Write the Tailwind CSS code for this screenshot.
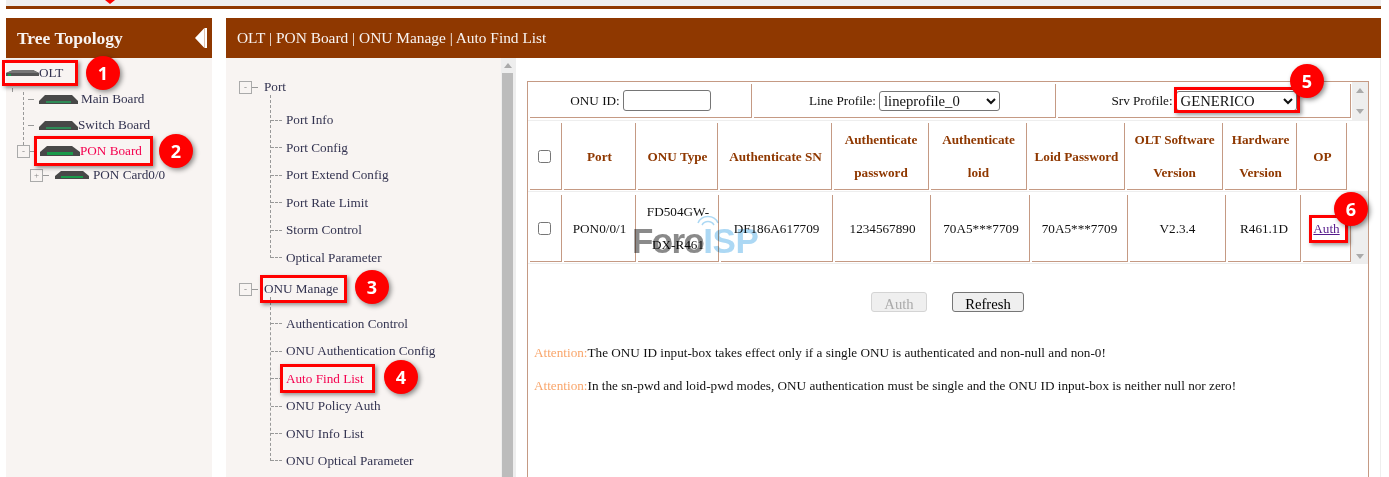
<!DOCTYPE html>
<html lang="en">
<head>
    <meta charset="UTF-8">
    <meta name="viewport" content="width=device-width, initial-scale=1.0">
    <title>Auto Find List</title>
    <script src="https://cdn.jsdelivr.net/npm/@tailwindcss/browser@4"></script>
</head>
<body class="relative h-[477px] overflow-hidden bg-white font-['Liberation_Serif',serif] text-[13.2px] text-[#111]">
    <!-- top strip -->
    <div class="ml-[6px] mr-[8px]">
        <div class="h-[6px] bg-[#eeeeee]"></div>
        <div class="h-[3px] bg-[#8f3800]"></div>
    </div>

    <div class="ml-[6px] mr-[8px] mt-[9px] flex gap-[14px]">
        <!-- tree topology -->
        <aside class="w-[206px] shrink-0">
            <div class="flex h-[40px] items-center justify-between bg-[#8f3800] pl-[11px] pr-[5px] text-[17.5px] font-bold text-[#f8f4f2]">
                <span>Tree Topology</span>
                <svg width="12" height="22" viewBox="0 0 12 22"><path d="M0 11 9.4 1V21Z M9.7 1H12V21H9.7Z" fill="#fff"/></svg>
            </div>
            <div class="h-[419px] bg-[#f8f4f2] pt-[2px] text-[#333350]">
                <div class="flex h-[26px] items-center">
                    <svg width="33" height="8" viewBox="0 0 33 8"><path d="M0 4 7 1H27L33 4V7H0Z" fill="#555"/><path d="M7 1H27L33 4H0Z" fill="#777"/><rect x="2" y="5" width="3" height="2" fill="#1a9a4a"/></svg>
                    <span>OLT</span>
                </div>
                <div class="ml-[6px] mt-[2px] h-[4px] border-l border-dashed border-[#999]"></div>
                <ul class="ml-[17px] flex flex-col gap-[12px] border-l border-dashed border-[#999] pb-[13px]">
                    <li class="flex h-[14px] items-center">
                        <span class="ml-[4px] mr-[5px] w-[6px] border-t border-[#999]"></span>
                        <svg width="39" height="9" viewBox="0 0 39 9"><path d="M0 6 6 0H33L39 6V9H0Z" fill="#484848"/><rect x="7" y="6" width="25" height="2" fill="#2e8b57"/></svg>
                        <span class="ml-[3px]">Main Board</span>
                    </li>
                    <li class="flex h-[14px] items-center">
                        <span class="ml-[4px] mr-[5px] w-[6px] border-t border-[#999]"></span>
                        <svg width="39" height="9" viewBox="0 0 39 9"><path d="M0 6 6 0H33L39 6V9H0Z" fill="#484848"/><rect x="7" y="6" width="25" height="2" fill="#2e8b57"/></svg>
                        <span>Switch Board</span>
                    </li>
                </ul>
                <div class="ml-[11px] flex h-[12px] items-center">
                    <span class="flex size-[13px] items-center justify-center border border-[#aaa] text-[9px] leading-none text-[#888]">-</span>
                    <span class="w-[6px] border-t border-[#999]"></span>
                    <svg class="ml-[4px]" width="40" height="10" viewBox="0 0 40 10"><path d="M0 6 7 0H32L40 6V10H0Z" fill="#484848"/><rect x="7" y="6" width="26" height="3" fill="#1a9a4a"/></svg>
                    <span class="text-[#f5004f]">PON Board</span>
                </div>
                <div class="ml-[24px] mt-[12px] flex h-[12px] items-center">
                    <span class="flex size-[13px] items-center justify-center border border-[#aaa] text-[9px] leading-none text-[#888]">+</span>
                    <span class="w-[6px] border-t border-[#999]"></span>
                    <svg class="ml-[6px]" width="34" height="8" viewBox="0 0 34 8"><path d="M0 5 6 0H28L34 5V8H0Z" fill="#484848"/><rect x="6" y="5" width="22" height="2" fill="#1a9a4a"/></svg>
                    <span class="ml-[4px]">PON Card0/0</span>
                </div>
            </div>
        </aside>

        <section class="min-w-0 flex-1">
            <div class="flex h-[40px] items-center bg-[#8f3800] pl-[11px] text-[15.4px] text-[#f8f4f2]">OLT | PON Board | ONU Manage | Auto Find List</div>
            <div class="flex h-[419px]">
                <!-- menu -->
                <nav class="w-[275px] shrink-0 bg-[#f8f4f2] pl-[13px] pt-[21px] text-[#333350]">
                    <div class="flex h-[16px] items-center">
                        <span class="flex size-[13px] items-center justify-center border border-[#aaa] text-[9px] leading-none text-[#888]">-</span>
                        <span class="w-[6px] border-t border-[#999]"></span>
                        <span class="ml-[6px]">Port</span>
                    </div>
                    <ul class="ml-[31px] flex flex-col border-l border-dashed border-[#999] pt-[11.5px]">
                        <li class="flex h-[27.5px] items-center"><span class="mr-[4px] w-[11px] border-t border-dashed border-[#999]"></span>Port Info</li>
                        <li class="flex h-[27.5px] items-center"><span class="mr-[4px] w-[11px] border-t border-dashed border-[#999]"></span>Port Config</li>
                        <li class="flex h-[27.5px] items-center"><span class="mr-[4px] w-[11px] border-t border-dashed border-[#999]"></span>Port Extend Config</li>
                        <li class="flex h-[27.5px] items-center"><span class="mr-[4px] w-[11px] border-t border-dashed border-[#999]"></span>Port Rate Limit</li>
                        <li class="flex h-[27.5px] items-center"><span class="mr-[4px] w-[11px] border-t border-dashed border-[#999]"></span>Storm Control</li>
                        <li class="-mb-[14px] flex h-[27.5px] items-center"><span class="mr-[4px] w-[11px] border-t border-dashed border-[#999]"></span>Optical Parameter</li>
                    </ul>
                    <div class="mt-[23.5px] flex h-[16px] items-center">
                        <span class="flex size-[13px] items-center justify-center border border-[#aaa] text-[9px] leading-none text-[#888]">-</span>
                        <span class="w-[6px] border-t border-[#999]"></span>
                        <span class="ml-[6px]">ONU Manage</span>
                    </div>
                    <ul class="ml-[31px] flex flex-col border-l border-dashed border-[#999] pt-[13.3px]">
                        <li class="flex h-[27.4px] items-center"><span class="mr-[4px] w-[11px] border-t border-dashed border-[#999]"></span>Authentication Control</li>
                        <li class="flex h-[27.4px] items-center"><span class="mr-[4px] w-[11px] border-t border-dashed border-[#999]"></span>ONU Authentication Config</li>
                        <li class="flex h-[27.4px] items-center"><span class="mr-[4px] w-[11px] border-t border-dashed border-[#999]"></span><span class="text-[#f5004f]">Auto Find List</span></li>
                        <li class="flex h-[27.4px] items-center"><span class="mr-[4px] w-[11px] border-t border-dashed border-[#999]"></span>ONU Policy Auth</li>
                        <li class="flex h-[27.4px] items-center"><span class="mr-[4px] w-[11px] border-t border-dashed border-[#999]"></span>ONU Info List</li>
                        <li class="-mb-[14px] flex h-[27.4px] items-center"><span class="mr-[4px] w-[11px] border-t border-dashed border-[#999]"></span>ONU Optical Parameter</li>
                    </ul>
                </nav>

                <!-- menu scrollbar -->
                <div class="flex w-[15px] shrink-0 flex-col bg-[#eeeeee] pl-[1px] pr-[3px]">
                    <div class="flex h-[15px] items-center justify-center"><svg width="8" height="5" viewBox="0 0 8 5"><path d="M4 0 8 5H0Z" fill="#aaa"/></svg></div>
                    <div class="flex-1 bg-[#bcbcbc]"></div>
                </div>

                <!-- auto find list -->
                <div class="min-w-0 flex-1 border-r border-[#eeeeee] pl-[11px] pr-[11px] pt-[23px]">
                    <div class="h-full border-x border-t border-[#c59a84]">
                        <!-- form row -->
                        <div class="flex h-[39px] border-b border-[#eeeeee] pl-[2px] pt-[2px]">
                            <div class="grid h-[34px] flex-1 grid-cols-[222px_302px_293px] gap-[2px]">
                                <label class="flex items-center justify-center gap-[3px] border-b border-r border-[#c59a84]">ONU ID:
                                    <input class="h-[21px] w-[88px] rounded-[3px] border border-[#767676] bg-white" type="text">
                                </label>
                                <label class="flex items-center justify-center gap-[3px] border-b border-r border-[#c59a84]">Line Profile:
                                    <select class="h-[20px] w-[121px] rounded-[3px] border border-[#767676] bg-white text-[14.67px]"><option>lineprofile_0</option></select>
                                </label>
                                <label class="flex items-center justify-center gap-[3px] border-b border-r border-[#c59a84]">Srv Profile:
                                    <select class="h-[20px] w-[121px] rounded-[3px] border border-[#767676] bg-white text-[14.67px]"><option>GENERICO</option></select>
                                </label>
                            </div>
                            <div class="-mt-[2px] flex h-[38px] w-[16px] flex-col items-center justify-between bg-[#eeeeee] py-[6px]">
                                <svg width="8" height="5" viewBox="0 0 8 5"><path d="M4 0 8 5H0Z" fill="#aaa"/></svg>
                                <svg width="8" height="5" viewBox="0 0 8 5"><path d="M4 5 8 0H0Z" fill="#aaa"/></svg>
                            </div>
                        </div>
                        <!-- table head -->
                        <div class="grid h-[71px] grid-cols-[32px_72px_80px_112px_95px_96px_96px_96px_72px_48px] gap-[2px] border-b border-[#eeeeee] pl-[2px] pt-[2px] text-center font-bold leading-[33px] text-[#8f3800]">
                            <div class="flex h-[67px] items-center justify-center border-b border-r border-[#c59a84] pr-[2px]"><input type="checkbox" class="size-[13px]"></div>
                            <div class="flex h-[67px] items-center justify-center border-b border-r border-[#c59a84]">Port</div>
                            <div class="flex h-[67px] items-center justify-center border-b border-r border-[#c59a84]">ONU Type</div>
                            <div class="flex h-[67px] items-center justify-center border-b border-r border-[#c59a84]">Authenticate SN</div>
                            <div class="flex h-[67px] items-center justify-center border-b border-r border-[#c59a84]">Authenticate password</div>
                            <div class="flex h-[67px] items-center justify-center border-b border-r border-[#c59a84]">Authenticate loid</div>
                            <div class="flex h-[67px] items-center justify-center border-b border-r border-[#c59a84]">Loid Password</div>
                            <div class="flex h-[67px] items-center justify-center border-b border-r border-[#c59a84]">OLT Software Version</div>
                            <div class="flex h-[67px] items-center justify-center border-b border-r border-[#c59a84]">Hardware Version</div>
                            <div class="flex h-[67px] items-center justify-center border-b border-r border-[#c59a84]">OP</div>
                        </div>
                        <!-- table body -->
                        <div class="flex h-[72px] border-b border-[#eeeeee] pl-[2px]">
                            <div class="grid h-[70px] flex-1 grid-cols-[32px_72px_81px_112px_96px_97px_96px_96px_73px_48px] gap-[2px] pt-[3px] text-center leading-[33px]">
                                <div class="flex h-[67px] items-center justify-center border-b border-r border-[#c59a84] pr-[2px]"><input type="checkbox" class="size-[13px]"></div>
                                <div class="flex h-[67px] items-center justify-center border-b border-r border-[#c59a84]">PON0/0/1</div>
                                <div class="flex h-[67px] items-center justify-center border-b border-r border-[#c59a84]">FD504GW-DX-R461</div>
                                <div class="flex h-[67px] items-center justify-center border-b border-r border-[#c59a84]">DF186A617709</div>
                                <div class="flex h-[67px] items-center justify-center border-b border-r border-[#c59a84]">1234567890</div>
                                <div class="flex h-[67px] items-center justify-center border-b border-r border-[#c59a84]">70A5***7709</div>
                                <div class="flex h-[67px] items-center justify-center border-b border-r border-[#c59a84]">70A5***7709</div>
                                <div class="flex h-[67px] items-center justify-center border-b border-r border-[#c59a84]">V2.3.4</div>
                                <div class="flex h-[67px] items-center justify-center border-b border-r border-[#c59a84]">R461.1D</div>
                                <div class="flex h-[67px] items-center justify-center border-b border-r border-[#c59a84]"><a href="#" class="text-[#551a8b] underline">Auth</a></div>
                            </div>
                            <div class="flex w-[17px] flex-col items-center justify-end bg-[#eeeeee] pb-[4px]">
                                <svg width="8" height="5" viewBox="0 0 8 5"><path d="M4 5 8 0H0Z" fill="#aaa"/></svg>
                            </div>
                        </div>
                        <!-- buttons -->
                        <div class="mt-[28px] flex justify-center gap-[25px] pr-[1px] text-[14.67px]">
                            <button disabled class="h-[20px] w-[56px] rounded-[3px] border border-[#d4d4d4] bg-[#efefef] text-[#aaaaaa]">Auth</button>
                            <button class="h-[20px] w-[72px] rounded-[3px] border border-[#767676] bg-[#efefef] text-black">Refresh</button>
                        </div>
                        <p class="ml-[6px] mt-[33px] leading-[15px]"><span class="text-[#f9a56a]">Attention:</span>The ONU ID input-box takes effect only if a single ONU is authenticated and non-null and non-0!</p>
                        <p class="ml-[6px] mt-[18px] leading-[15px]"><span class="text-[#f9a56a]">Attention:</span>In the sn-pwd and loid-pwd modes, ONU authentication must be single and the ONU ID input-box is neither null nor zero!</p>
                    </div>
                </div>
            </div>
        </section>
    </div>

    <!-- watermark -->
    <div class="pointer-events-none absolute left-[632px] top-[221px] flex font-['Liberation_Sans',sans-serif] text-[35px] font-bold leading-[40px] mix-blend-multiply">
        <span class="tracking-[-1.6px] text-[#8a8a8a]">Foro</span><span class="tracking-[-0.5px] text-[#acd8f4]">ISP</span>
    </div>
    <svg class="pointer-events-none absolute left-[697px] top-[214px] mix-blend-multiply" width="22" height="14" viewBox="0 0 22 14" fill="none" stroke="#acd8f4" stroke-width="1.5"><path d="M1 9A11 11 0 0 1 21 9M5 11A7 7 0 0 1 17 11"/></svg>

    <!-- annotations -->
    <svg class="absolute left-[105px] top-0" width="10" height="4" viewBox="0 0 10 4"><path d="M0 0H10L5 4Z" fill="#f00"/></svg>

    <div class="absolute left-[2px] top-[60px] h-[26px] w-[76px] border-[3px] border-[#f00] shadow-[2px_2px_4px_rgba(0,0,0,0.4)]"></div>
    <div class="absolute left-[34px] top-[136px] h-[30px] w-[119px] border-[3px] border-[#f00] shadow-[2px_2px_4px_rgba(0,0,0,0.4)]"></div>
    <div class="absolute left-[260px] top-[275px] h-[28px] w-[87px] border-[3px] border-[#f00] shadow-[2px_2px_4px_rgba(0,0,0,0.4)]"></div>
    <div class="absolute left-[280px] top-[364px] h-[29px] w-[95px] border-[3px] border-[#f00] shadow-[2px_2px_4px_rgba(0,0,0,0.4)]"></div>
    <div class="absolute left-[1174px] top-[87px] h-[26px] w-[126px] border-[3px] border-[#f00] shadow-[2px_2px_4px_rgba(0,0,0,0.4)]"></div>
    <div class="absolute left-[1309px] top-[215px] h-[28px] w-[39px] border-[3px] border-[#f00] shadow-[2px_2px_4px_rgba(0,0,0,0.4)]"></div>

    <div class="absolute left-[86px] top-[56px] flex size-[34px] items-center justify-center rounded-full bg-[#f00] font-['Open_Sans',sans-serif] text-[18px] font-bold text-white shadow-[2px_2px_5px_rgba(0,0,0,0.45)]">1</div>
    <div class="absolute left-[159px] top-[134px] flex size-[34px] items-center justify-center rounded-full bg-[#f00] font-['Open_Sans',sans-serif] text-[18px] font-bold text-white shadow-[2px_2px_5px_rgba(0,0,0,0.45)]">2</div>
    <div class="absolute left-[355px] top-[270px] flex size-[34px] items-center justify-center rounded-full bg-[#f00] font-['Open_Sans',sans-serif] text-[18px] font-bold text-white shadow-[2px_2px_5px_rgba(0,0,0,0.45)]">3</div>
    <div class="absolute left-[384px] top-[360px] flex size-[34px] items-center justify-center rounded-full bg-[#f00] font-['Open_Sans',sans-serif] text-[18px] font-bold text-white shadow-[2px_2px_5px_rgba(0,0,0,0.45)]">4</div>
    <div class="absolute left-[1290px] top-[64px] flex size-[34px] items-center justify-center rounded-full bg-[#f00] font-['Open_Sans',sans-serif] text-[18px] font-bold text-white shadow-[2px_2px_5px_rgba(0,0,0,0.45)]">5</div>
    <div class="absolute left-[1334px] top-[192px] flex size-[34px] items-center justify-center rounded-full bg-[#f00] font-['Open_Sans',sans-serif] text-[18px] font-bold text-white shadow-[2px_2px_5px_rgba(0,0,0,0.45)]">6</div>
</body>
</html>
